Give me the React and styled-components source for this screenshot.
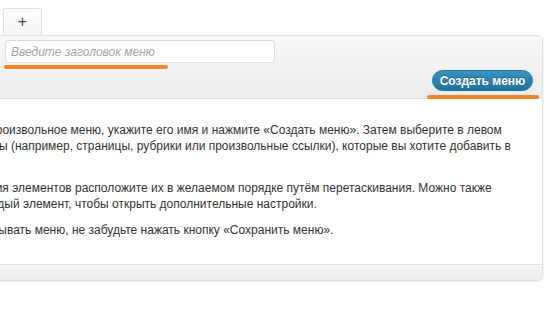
import React from "react";
import styled, { createGlobalStyle } from "styled-components";

const GlobalStyle = createGlobalStyle`
  html, body { margin: 0; padding: 0; background: #ffffff; }
  body { font-family: "Liberation Sans", Arial, sans-serif; color: #333; }
`;

const Viewport = styled.div`
  width: 550px;
  height: 315px;
  overflow: hidden;
  background: #fff;
`;

const Canvas = styled.div`
  margin-left: -110px;
  width: 653px;
`;

const TabBar = styled.div`
  display: flex;
  align-items: flex-end;
  padding: 8px 0 0 113px;
  height: 35px;
  box-sizing: border-box;
`;

const Tab = styled.div`
  width: 39px;
  height: 27px;
  box-sizing: border-box;
  border: 1px solid #dfdfdf;
  border-bottom: none;
  border-radius: 3px 3px 0 0;
  background: linear-gradient(to bottom, #fdfdfd, #f6f6f6);
  display: flex;
  align-items: center;
  justify-content: center;
  font-size: 16px;
  color: #444;
  line-height: 1;
  padding-bottom: 1px;
`;

const Panel = styled.div`
  border: 1px solid #dfdfdf;
  border-radius: 0 6px 6px 0;
  box-shadow: 1px 1px 2px rgba(0, 0, 0, 0.06);
  background: #fff;
  overflow: hidden;
`;

const Header = styled.div`
  display: flex;
  flex-direction: column;
  padding: 4px 9px 7px 114px;
  background: linear-gradient(to bottom, #f8f8f8, #ececec);
  border-bottom: 1px solid #dfdfdf;
`;

const Row = styled.div`
  display: flex;
  justify-content: ${(p) => (p.$end ? "flex-end" : "flex-start")};
  margin-top: ${(p) => p.$gap || 0}px;
`;

const Marked = styled.div`
  position: relative;
  display: flex;
`;

const Highlight = styled.span`
  position: absolute;
  left: ${(p) => p.$left}px;
  top: ${(p) => p.$top}px;
  width: ${(p) => p.$width}px;
  height: 4px;
  border-radius: 2px;
  background: #f5842b;
  z-index: 2;
`;

const NameInput = styled.input`
  width: 270px;
  height: 23px;
  box-sizing: border-box;
  border: 1px solid #dcdcdc;
  border-radius: 3px;
  background: #fff;
  padding: 0 5px;
  font-family: "Liberation Sans", Arial, sans-serif;
  font-size: 12px;
  color: #333;
  outline: none;
  &::placeholder {
    color: #a4a4a4;
    font-style: italic;
  }
`;

const CreateButton = styled.button`
  height: 21px;
  width: 101px;
  box-sizing: border-box;
  border: 1px solid #21759b;
  border-radius: 11px;
  background: linear-gradient(to bottom, #3a93c0, #20729a);
  color: #fff;
  font-family: "Liberation Sans", Arial, sans-serif;
  font-size: 12px;
  font-weight: bold;
  text-shadow: 0 -1px 0 rgba(0, 0, 0, 0.3);
  padding: 0;
  cursor: pointer;
  display: flex;
  align-items: center;
  justify-content: center;
`;

const Body = styled.div`
  padding: 13px 30px 16px 13px;
`;

const Para = styled.p`
  margin: 10px 0;
  font-size: 12px;
  line-height: 16px;
  color: #333;
`;

const Footer = styled.div`
  height: 15px;
  border-top: 1px solid #dfdfdf;
  background: linear-gradient(to bottom, #f6f6f6, #ebebeb);
`;

export default function App() {
  return (
    <>
      <GlobalStyle />
      <Viewport>
        <Canvas>
          <TabBar>
            <Tab>+</Tab>
          </TabBar>
          <Panel>
            <Header>
              <Row>
                <Marked>
                  <NameInput placeholder="Введите заголовок меню" />
                  <Highlight $left={-1} $top={25} $width={164} />
                </Marked>
              </Row>
              <Row $end $gap={7}>
                <Marked>
                  <CreateButton>Создать меню</CreateButton>
                  <Highlight $left={-5} $top={25} $width={112} />
                </Marked>
              </Row>
            </Header>
            <Body>
              <Para>
                Чтобы создать произвольное меню, укажите его имя и нажмите
                «Создать меню». Затем выберите в левом столбце элементы
                (например, страницы, рубрики или произвольные ссылки), которые
                вы хотите добавить в меню.
              </Para>
              <Para>
                После добавления элементов расположите их в желаемом порядке
                путём перетаскивания. Можно также щёлкнуть на каждый элемент,
                чтобы открыть дополнительные настройки.
              </Para>
              <Para>
                Закончив прописывать меню, не забудьте нажать кнопку «Сохранить
                меню».
              </Para>
            </Body>
            <Footer />
          </Panel>
        </Canvas>
      </Viewport>
    </>
  );
}
